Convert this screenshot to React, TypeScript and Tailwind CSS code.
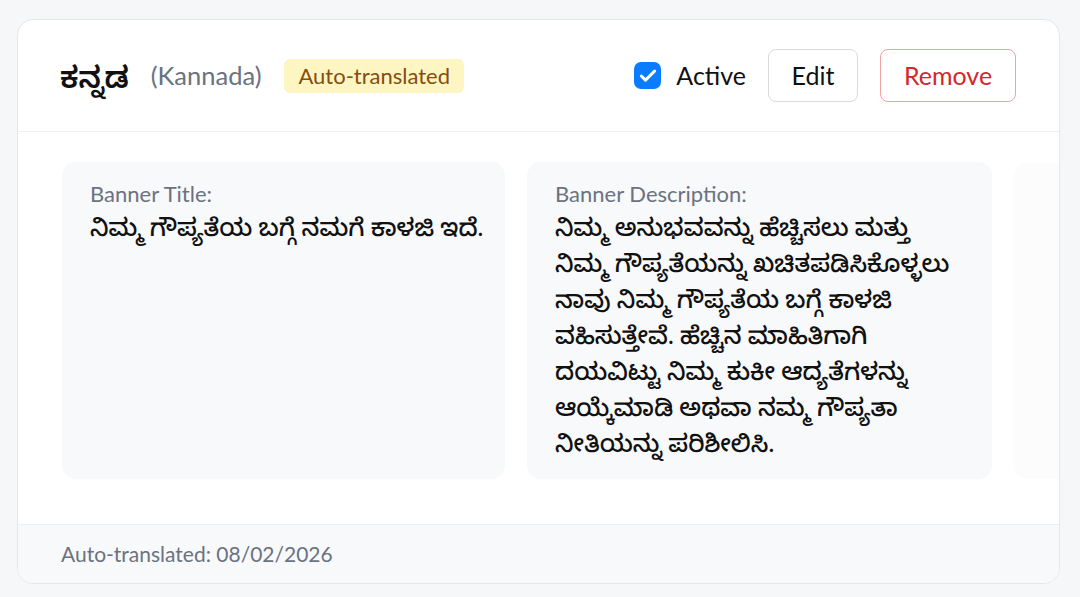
import { Check } from "lucide-react"

const fontStack = { fontFamily: 'Lato, "Noto Sans Kannada", "Noto Sans", sans-serif' }

const descLines = [
  "ನಿಮ್ಮ ಅನುಭವವನ್ನು ಹೆಚ್ಚಿಸಲು ಮತ್ತು",
  "ನಿಮ್ಮ ಗೌಪ್ಯತೆಯನ್ನು ಖಚಿತಪಡಿಸಿಕೊಳ್ಳಲು",
  "ನಾವು ನಿಮ್ಮ ಗೌಪ್ಯತೆಯ ಬಗ್ಗೆ ಕಾಳಜಿ",
  "ವಹಿಸುತ್ತೇವೆ. ಹೆಚ್ಚಿನ ಮಾಹಿತಿಗಾಗಿ",
  "ದಯವಿಟ್ಟು ನಿಮ್ಮ ಕುಕೀ ಆದ್ಯತೆಗಳನ್ನು",
  "ಆಯ್ಕೆಮಾಡಿ ಅಥವಾ ನಮ್ಮ ಗೌಪ್ಯತಾ",
  "ನೀತಿಯನ್ನು ಪರಿಶೀಲಿಸಿ.",
]

export default function App() {
  return (
    <div style={fontStack} className="min-h-[597px] bg-[#f6f7f9] pt-[19px] pl-[17px] pr-[20px]">
      {/* -------------- Translation Card ------------- */}
      <div className="w-[1043px] h-[565px] bg-white border border-[#e5e7eb] rounded-[16px] overflow-hidden flex flex-col">
        {/* Header */}
        <div className="h-[112px] shrink-0 flex items-center justify-between pl-[42px] pr-[43px] border-b border-[#eef0f3]">
          <div className="flex items-center">
            <h3 className="text-[30px] font-semibold text-[#111] leading-none">ಕನ್ನಡ</h3>
            <span className="ml-[22px] text-[25.5px] text-[#6b7280]">(Kannada)</span>
            <span className="ml-[23px] px-[14px] h-[34px] flex items-center rounded-[6px] bg-[#fdf6c3] text-[#854d0e] text-[22px]">
              Auto-translated
            </span>
          </div>

          <div className="flex items-center">
            <label className="flex items-center gap-[15px] mr-[22px]">
              <span className="w-[27px] h-[27px] rounded-[7px] bg-[#0a7cff] flex items-center justify-center">
                <Check className="w-[20px] h-[20px] text-white" strokeWidth={3.6} />
              </span>
              <span className="text-[25px] text-[#111]">Active</span>
            </label>
            <button className="w-[90px] h-[53px] rounded-[8px] border border-[#d7d9dd] bg-white text-[25px] text-[#111]">
              Edit
            </button>
            <button className="ml-[22px] w-[136px] h-[53px] rounded-[8px] border border-[#f0a3a3] bg-white text-[25px] text-[#d0282c]">
              Remove
            </button>
          </div>
        </div>

        {/* Body - fields */}
        <div className="flex-1 overflow-hidden pt-[30px] pb-[45px] pl-[44px]">
          <div className="flex gap-[22px] h-full">
            <div className="w-[443px] shrink-0 bg-[#f8f9fb] rounded-[14px] px-[28px] pt-[18px]">
              <p className="text-[22px] text-[#6b7280] leading-[28px]">Banner Title:</p>
              <p className="mt-[1px] text-[24.5px] font-medium text-[#111] leading-[36px] whitespace-nowrap">ನಿಮ್ಮ ಗೌಪ್ಯತೆಯ ಬಗ್ಗೆ ನಮಗೆ ಕಾಳಜಿ ಇದೆ.</p>
            </div>

            <div className="w-[465px] shrink-0 bg-[#f8f9fb] rounded-[14px] px-[28px] pt-[18px]">
              <p className="text-[22px] text-[#6b7280] leading-[28px]">Banner Description:</p>
              <div className="mt-[1px] text-[24.5px] font-medium text-[#111] leading-[36px]">
                {descLines.map((line) => (
                  <p key={line} className="whitespace-nowrap">{line}</p>
                ))}
              </div>
            </div>

            {/* third field, clipped */}
            <div className="w-[300px] shrink-0 bg-[#fcfcfd] rounded-[14px]"></div>
          </div>
        </div>

        {/* Footer */}
        <div className="h-[59px] shrink-0 flex items-center px-[43px] bg-[#f8f9fa] border-t border-[#eceef1]">
          <span className="text-[21px] text-[#6b7280]">Auto-translated: 08/02/2026</span>
        </div>
      </div>
    </div>
  )
}
